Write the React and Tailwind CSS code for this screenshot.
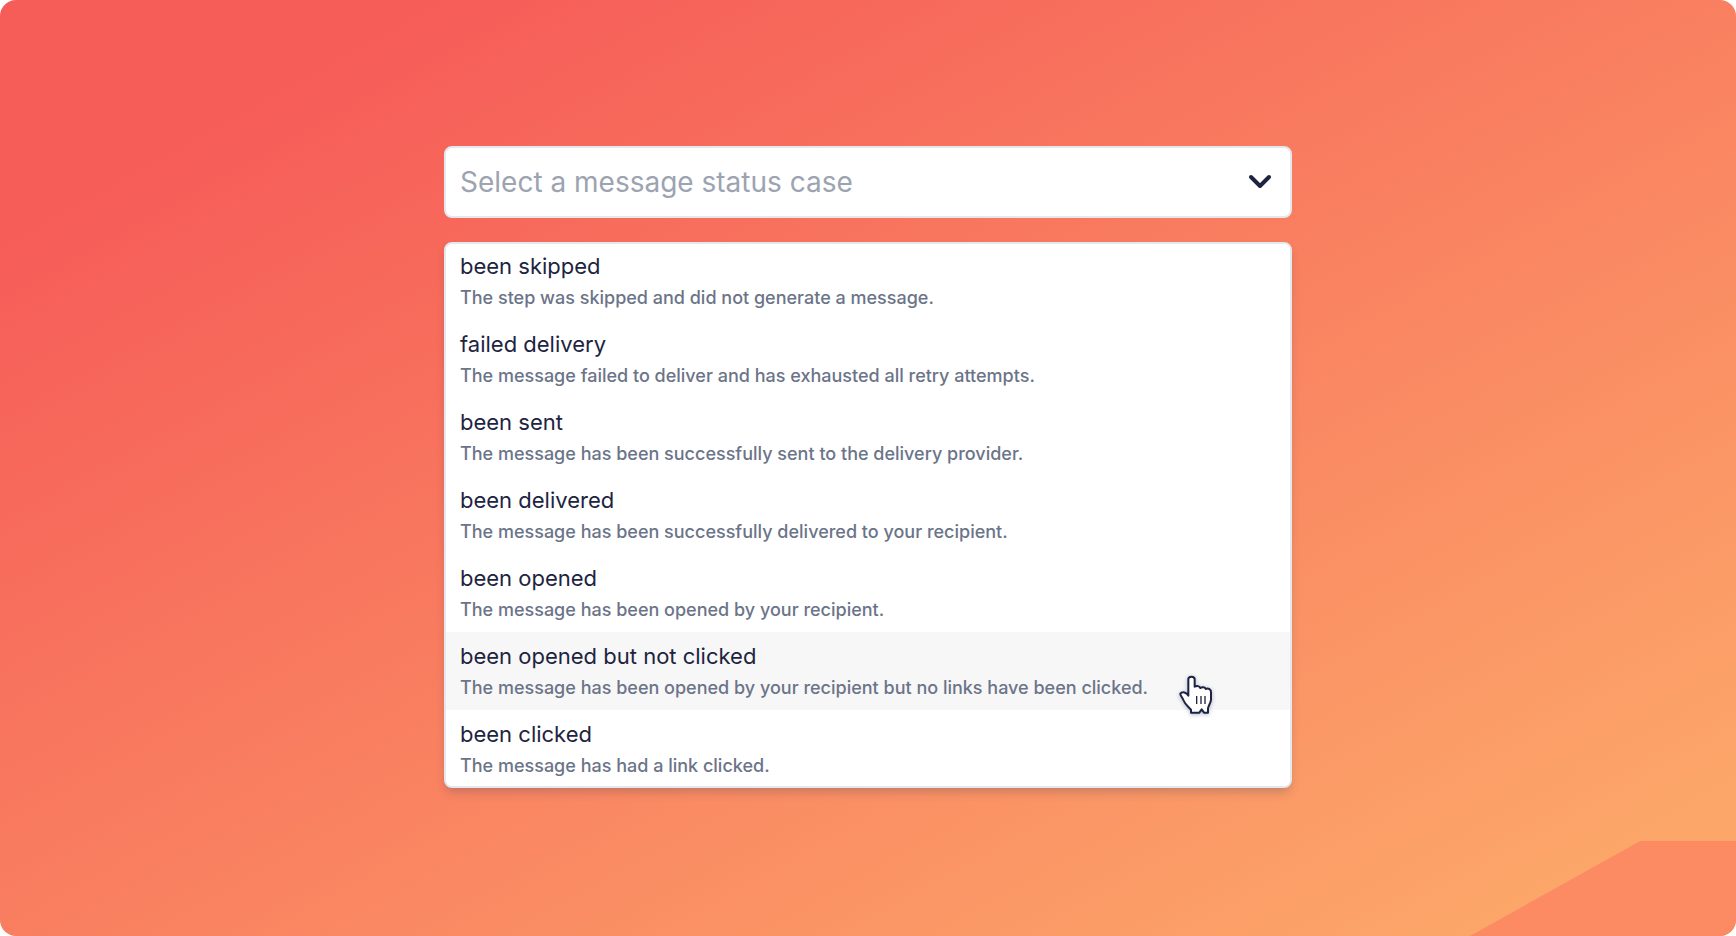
import React, { useState } from "react";

const STATUS_CASES = [
  { id: "skipped", name: "been skipped", description: "The step was skipped and did not generate a message." },
  { id: "failed", name: "failed delivery", description: "The message failed to deliver and has exhausted all retry attempts." },
  { id: "sent", name: "been sent", description: "The message has been successfully sent to the delivery provider." },
  { id: "delivered", name: "been delivered", description: "The message has been successfully delivered to your recipient." },
  { id: "opened", name: "been opened", description: "The message has been opened by your recipient." },
  { id: "opened_not_clicked", name: "been opened but not clicked", description: "The message has been opened by your recipient but no links have been clicked." },
  { id: "clicked", name: "been clicked", description: "The message has had a link clicked." },
];

const HandPointer = () => (
  <svg
    aria-hidden="true"
    viewBox="0 0 180 180"
    className="pointer-events-none absolute top-[33px] right-[60px] z-10 size-[60px] drop-shadow-[0_1px_2px_rgba(80,100,160,0.45)]"
  >
    <path
      d="M55 92V43C55 33 74 33 74 43V65C80 62 88 63 91 69C97 65 105 66 107 72C115 68 124 73 123 82V104C122 115 116 120 114 130V143H102L95 133L88 143H63V134C54 124 45 118 40 105C37 97 31 92 31 86C36 79 50 81 55 92Z"
      fill="#fff"
      stroke="#1d2440"
      strokeWidth="6"
      strokeLinejoin="round"
    />
    <path d="M80 93V117M93 93V117M105 93V117" fill="none" stroke="#1d2440" strokeWidth="4" />
  </svg>
);

const App = () => {
  const [selected, setSelected] = useState("");
  const [highlighted, setHighlighted] = useState("opened_not_clicked");

  return (
    <div className="bg-white">
      <main className="relative min-h-screen overflow-hidden rounded-2xl bg-linear-[151deg,#f65c58_12%,#fca669_92%] px-6 pt-[146px] pb-12 font-['Inter',sans-serif]">
        {/* Corner shape */}
        <div className="absolute right-0 bottom-0 h-[95px] w-[266px] bg-[#fc8b63] [clip-path:polygon(64%_0,100%_0,100%_100%,0_100%)]" />

        <div className="relative mx-auto flex max-w-[848px] flex-col gap-6">
          {/* Status select */}
          <div className="relative">
            <select
              aria-label="Message status case"
              value={selected}
              onChange={(e) => setSelected(e.target.value)}
              className={`block h-[72px] w-full appearance-none rounded-lg border-2 border-[#e3e8ee] bg-white px-3.5 text-[28px] outline-none ${selected ? "text-[#1d2440]" : "text-[#9ca3b1]"}`}
            >
              <option value="" disabled>Select a message status case</option>
              {STATUS_CASES.map((item) => (
                <option key={item.id} value={item.id}>{item.name}</option>
              ))}
            </select>
            <svg
              aria-hidden="true"
              viewBox="0 0 24 16"
              className="pointer-events-none absolute top-7 right-5 h-4 w-6"
            >
              <path d="M3 3L12 12L21 3" fill="none" stroke="#1d2440" strokeWidth="4" strokeLinecap="round" strokeLinejoin="round" />
            </svg>
          </div>

          {/* Options */}
          <div className="flex flex-col overflow-hidden rounded-lg border-2 border-[#e3e8ee] bg-white shadow-[0_6px_10px_-2px_rgba(60,60,90,0.25)]">
            <ul className="-my-0.5">
              {STATUS_CASES.map((item) => (
                <li key={item.id} className="relative">
                  <button
                    type="button"
                    onClick={() => setSelected(item.id)}
                    onMouseEnter={() => setHighlighted(item.id)}
                    className={`flex h-[78px] w-full flex-col gap-1 px-3.5 pt-2.5 text-left ${highlighted === item.id ? "bg-[#f7f7f7]" : "bg-white"}`}
                  >
                    <span className="text-[22px] leading-7 text-[#1d2440]">{item.name}</span>
                    <span className="text-lg leading-7 font-medium text-[#6b7488]">{item.description}</span>
                  </button>
                  {item.id === "opened_not_clicked" && <HandPointer />}
                </li>
              ))}
            </ul>
          </div>
        </div>
      </main>
    </div>
  );
};

export default App;
